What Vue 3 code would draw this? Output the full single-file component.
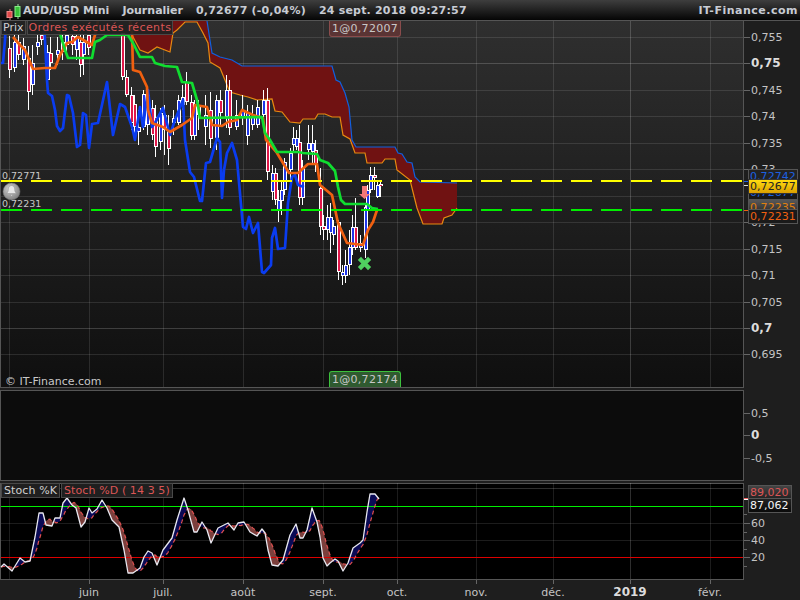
<script setup>
// x positions of the month lines
const months = [
  { x: 89, t: 'juin' }, { x: 163, t: 'juil.' }, { x: 243, t: 'août' },
  { x: 323, t: 'sept.' }, { x: 397, t: 'oct.' }, { x: 476, t: 'nov.' },
  { x: 553, t: 'déc.' }, { x: 630, t: '2019', bold: true }, { x: 710, t: 'févr.' },
]
const minorX = [9]

const priceTicks = [
  { y: 37, t: '0,755' }, { y: 63, t: '0,75', bold: true }, { y: 90, t: '0,745' },
  { y: 116, t: '0,74' }, { y: 143, t: '0,735' }, { y: 169, t: '0,73' },
  { y: 222, t: '0,72' }, { y: 249, t: '0,715' }, { y: 275, t: '0,71' },
  { y: 302, t: '0,705' }, { y: 328, t: '0,7', bold: true }, { y: 354, t: '0,695' },
]
const midTicks = [{ y: 413, t: '0,5' }, { y: 435, t: '0', bold: true }, { y: 458, t: '-0,5' }]
const stochTicks = [{ y: 523, t: '60' }, { y: 540, t: '40' }, { y: 557, t: '20' }]
const stochMinor = [514, 532, 549, 566]

// x, body top, body bottom, wick top, wick bottom, colour
const candles = [
  [9,48,70,36,78,'r'],[14,42,68,35,72,'b'],[18,42,55,35,60,'r'],[23,46,60,38,65,'b'],
  [28,58,92,46,110,'r'],[32,63,85,45,95,'b'],[37,42,47,35,55,'b'],[41,35,40,35,45,'r'],
  [47,52,80,45,90,'b'],[50,53,63,37,70,'r'],[57,50,55,37,65,'b'],[62,42,52,35,60,'r'],
  [66,35,45,35,55,'b'],[72,36,45,35,55,'r'],[76,36,50,35,60,'b'],[80,42,65,35,77,'r'],
  [83,42,55,35,75,'b'],[88,35,48,35,55,'r'],[122,33,77,33,80,'r'],[126,77,95,70,97,'r'],
  [131,95,123,87,130,'r'],[134,104,127,95,135,'r'],[138,127,132,110,145,'b'],[143,94,127,90,130,'b'],
  [147,95,125,90,135,'b'],[152,108,135,100,140,'r'],[155,117,147,105,157,'r'],[160,113,142,108,150,'b'],
  [164,115,130,105,155,'r'],[168,130,149,115,165,'r'],[173,118,123,110,135,'b'],[178,100,123,95,125,'b'],
  [182,97,105,85,110,'b'],[186,82,102,72,105,'r'],[191,102,136,95,140,'r'],[194,105,136,100,140,'b'],
  [198,105,115,100,130,'r'],[205,115,127,95,145,'b'],[210,110,139,92,148,'r'],[216,100,138,95,150,'b'],
  [220,100,113,90,125,'r'],[226,90,117,75,128,'b'],[229,90,128,80,135,'r'],[236,115,127,100,130,'b'],
  [242,110,117,95,125,'b'],[247,113,136,105,145,'b'],[252,117,125,105,130,'b'],[257,107,125,100,128,'b'],
  [263,100,115,90,120,'b'],[267,100,172,88,180,'r'],[272,173,192,165,200,'b'],[275,173,200,168,205,'r'],
  [278,200,211,190,222,'b'],[281,190,201,180,215,'b'],[284,162,190,158,195,'b'],[290,153,170,148,180,'b'],
  [293,138,145,127,153,'b'],[296,138,147,130,150,'b'],[299,142,198,125,205,'r'],[302,168,198,160,205,'b'],
  [308,143,150,125,160,'b'],[312,143,152,125,165,'b'],[315,150,165,140,172,'r'],[320,188,227,168,235,'r'],
  [323,226,230,215,240,'r'],[327,217,230,205,240,'b'],[330,217,233,203,253,'b'],[333,226,235,220,245,'b'],
  [338,222,272,220,280,'r'],[342,272,276,265,285,'b'],[345,265,276,250,283,'b'],[349,247,265,230,275,'b'],
  [352,227,248,215,255,'b'],[355,227,248,198,250,'r'],[360,243,248,235,252,'b'],[365,207,250,203,258,'b'],
  [367,190,210,185,212,'b'],[370,175,190,167,193,'b'],[374,175,178,167,190,'r'],[377,185,197,180,198,'b'],
  [380,184,186,180,197,'r'],
].map(([x, top, bot, wt, wb, c]) => ({ x, top, bot, wt, wb, c }))

const toPts = a => a.map(p => p.join(',')).join(' ')

const blueA = toPts([[1,63],[3,63],[5,40],[6,21]])
const blueB = toPts([[44,21],[47,80],[48,93],[52,96],[55,110],[57,126],[60,131],[63,128],[67,95],[69,96],[73,113],[77,147],[80,145],[83,113],[86,115],[89,148],[92,124],[98,123],[107,82],[113,135],[120,104],[125,107],[132,127],[135,140],[140,107],[143,127],[148,90],[152,127],[155,123],[163,108],[170,135],[175,120],[183,100],[185,140],[190,172],[194,177],[200,201],[202,201],[206,163],[210,162],[217,138],[220,142],[222,198],[224,170],[227,153],[232,143],[237,160],[243,227],[246,229],[249,217],[253,233],[258,223],[262,272],[264,273],[271,265],[272,238],[275,228],[278,249],[285,248],[288,203],[292,177],[295,175],[298,185],[304,187]])
const orangeA = toPts([[13,37],[20,45],[25,50],[33,69],[45,68],[55,68],[60,55],[67,43],[72,42],[78,37],[92,45],[95,35],[98,21]])
const orangeB = toPts([[130,21],[132,33],[133,70],[140,72],[147,87],[148,110],[152,123],[163,127],[170,132],[182,125],[192,118],[195,105],[207,107],[212,125],[222,126],[228,122],[237,120],[242,110],[253,115],[263,118],[266,140],[277,153],[289,173],[298,173],[308,164],[317,164],[320,185],[332,195],[338,223],[347,243],[363,245],[368,230],[373,222],[377,210]])
const green = toPts([[59,30],[65,50],[68,58],[92,58],[95,42],[100,40],[107,35],[128,35],[133,43],[140,57],[152,57],[155,63],[165,66],[177,67],[182,82],[192,83],[197,100],[200,118],[262,117],[265,133],[270,140],[277,152],[298,152],[303,153],[317,154],[320,160],[328,163],[335,171],[338,187],[341,200],[345,204],[367,204],[372,208],[378,209]])

const cloudTop = [[128,21],[207,21],[212,53],[220,57],[232,60],[242,66],[332,66],[336,80],[340,82],[345,93],[349,107],[352,140],[356,147],[395,147],[398,153],[402,154],[407,162],[412,163],[415,177],[420,182],[457,183]]
const cloudBot = [[132,35],[140,50],[148,53],[157,47],[170,52],[173,33],[177,30],[185,22],[197,22],[203,33],[208,43],[210,62],[220,68],[227,85],[230,92],[240,95],[248,97],[257,100],[272,99],[275,111],[282,112],[290,122],[300,123],[303,119],[315,119],[318,114],[325,114],[332,117],[340,117],[343,135],[350,139],[355,153],[365,153],[367,163],[382,163],[385,159],[395,159],[397,170],[410,180],[417,208],[423,224],[442,224],[444,218],[452,215],[457,208]]
const cloudFill = toPts([...cloudTop, ...[...cloudBot].reverse()])
const cloudUp = toPts(cloudTop.slice(1))
const cloudLow = toPts(cloudBot)

// stochastic: %K by hand, %D is a moving average of it
const k = [[1,567],[4,564],[12,571],[20,558],[25,562],[30,561],[35,537],[39,513],[43,513],[46,525],[52,526],[55,518],[60,518],[63,503],[67,498],[72,505],[76,508],[81,527],[85,522],[89,508],[92,513],[97,509],[102,500],[107,508],[112,520],[119,527],[124,550],[128,573],[133,573],[140,568],[144,557],[148,551],[152,553],[157,565],[163,550],[172,538],[177,520],[184,498],[188,510],[194,532],[197,532],[202,522],[207,530],[211,543],[218,528],[228,523],[234,530],[238,523],[244,522],[250,532],[257,536],[262,529],[265,533],[268,550],[272,565],[278,566],[283,560],[290,535],[296,524],[300,538],[303,538],[307,530],[312,508],[317,522],[320,537],[323,558],[327,566],[330,563],[335,559],[338,561],[343,571],[348,563],[353,548],[360,543],[363,540],[367,512],[370,494],[375,494],[379,499]]

function kAt(x) {
  if (x <= k[0][0]) return k[0][1]
  for (let i = 1; i < k.length; i++) {
    if (x <= k[i][0]) {
      const [x0, y0] = k[i - 1]
      const [x1, y1] = k[i]
      return y0 + (y1 - y0) * (x - x0) / (x1 - x0)
    }
  }
  return k[k.length - 1][1]
}
const dAt = x => (kAt(x) + kAt(x - 3.5) + kAt(x - 7) + kAt(x - 10.5)) / 4

const dLine = []
const fills = []
let run = null
for (let x = 1; x <= 379; x++) {
  const ky = kAt(x)
  const dy = dAt(x)
  dLine.push([x, dy.toFixed(1)])
  const up = ky < dy
  if (!run || run.up !== up) {
    run = { up, a: [], b: [] }
    fills.push(run)
  }
  run.a.push([x, ky.toFixed(1)])
  run.b.unshift([x, dy.toFixed(1)])
}
const stochFills = fills.map(r => ({ up: r.up, pts: toPts([...r.a, ...r.b]) }))
const kPts = toPts(k)
const dPts = toPts(dLine)
</script>

<template>
  <div class="chart">
    <header class="topbar">
      <svg class="logo" width="19" height="19" viewBox="0 0 19 19">
        <rect x="6" y="8" width="1" height="11" fill="#d88" />
        <rect x="3.5" y="10.5" width="5" height="6" fill="#e04848" stroke="#e88" />
        <rect x="14" y="3" width="1" height="15" fill="#9d9" />
        <rect x="11.5" y="5.5" width="5" height="10" fill="#38c038" stroke="#8e8" />
      </svg>
      <span>AUD/USD Mini</span>
      <span>Journalier</span>
      <span class="wide">0,72677 (-0,04%)</span>
      <span class="wide">24 sept. 2018 09:27:57</span>
      <span class="brand">IT-Finance.com</span>
    </header>

    <section class="row">
      <div class="plot plot-price">
        <svg width="744" height="367" viewBox="0 21 744 367">
          <g class="grid">
            <line v-for="t in priceTicks" :key="t.y" x1="1" x2="743" :y1="t.y + 0.5" :y2="t.y + 0.5" :class="{ strong: t.bold }" />
            <line x1="1" x2="743" y1="196.5" y2="196.5" />
            <line v-for="x in minorX" :key="x" :x1="x + 0.5" :x2="x + 0.5" y1="21" y2="387" />
            <line v-for="m in months" :key="m.x" :x1="m.x + 0.5" :x2="m.x + 0.5" y1="21" y2="387" :class="{ strong: m.bold }" />
          </g>

          <polygon :points="cloudFill" fill="#701212" />
          <polyline :points="cloudUp" class="thin" stroke="#1060e0" />
          <polyline :points="cloudLow" class="thin" stroke="#e88a10" />

          <g v-for="c in candles" :key="c.x" shape-rendering="crispEdges">
            <rect :x="c.x" :y="c.wt" width="1" :height="c.wb - c.wt" fill="#fff" />
            <rect :x="c.x - 1" :y="c.top" width="4" :height="c.bot - c.top" fill="#fff" />
            <rect :x="c.x" :y="c.top + 1" width="1.6" :height="Math.max(c.bot - c.top - 2, 1)" :fill="c.c === 'r' ? '#e0184a' : '#2036e8'" />
          </g>

          <polyline :points="blueA" class="line" stroke="#0a3cf0" />
          <polyline :points="blueB" class="line" stroke="#0a3cf0" />
          <polyline :points="orangeA" class="line" stroke="#f06010" />
          <polyline :points="orangeB" class="line" stroke="#f06010" />
          <polyline :points="green" class="line" stroke="#10dd30" />

          <line x1="1" x2="743" y1="181" y2="181" class="dash" stroke="#ffff00" />
          <line x1="1" x2="743" y1="210" y2="210" class="dash" stroke="#00ee00" />

          <polygon points="362,186 367,186 367,194 370,194 364.5,199 359,194 362,194" fill="#f47878" />
          <path d="M361 260 L368 267 M368 260 L361 267" stroke="#50d060" stroke-width="4.5" stroke-linecap="square" fill="none" />

          <circle cx="11.5" cy="191.5" r="8.5" fill="url(#bell)" stroke="#777" stroke-width="0.5" />
          <path d="M11.5 185.5c-2.4 0-3.2 2-3.2 4.2 0 1.8-.8 2.8-1.8 3.8h10c-1-1-1.800-2-1.800-3.800 0-2.200-.8-4.200-3.200-4.200z M10 194.500h3l-1.500 1.800z" fill="#e8e8e8" stroke="#8c8c8c" stroke-width="0.5" />
          <defs>
            <radialGradient id="bell" cx="0.4" cy="0.35" r="0.75">
              <stop offset="0" stop-color="#d4d4d4" />
              <stop offset="1" stop-color="#747474" />
            </radialGradient>
          </defs>

          <text x="2" y="178.500" class="tiny">0,72771</text>
          <text x="2" y="207" class="tiny">0,72231</text>
          <text x="5" y="385" class="small">© IT-Finance.com</text>
        </svg>
        <div class="legend">
          <span class="tag">Prix</span>
          <span class="tag red orders">Ordres exécutés récents</span>
        </div>
        <div class="trade sell">1@0,72007</div>
        <div class="trade buy">1@0,72174</div>
      </div>
      <div class="axis">
        <svg width="56" height="367" viewBox="744 21 56 367">
          <g v-for="t in priceTicks" :key="t.y">
            <line x1="744" x2="750" :y1="t.y + 0.5" :y2="t.y + 0.5" class="tick" />
            <text x="751" :y="t.y + 4" class="label" :class="{ bold: t.bold }">{{ t.t }}</text>
          </g>
          <rect x="744" y="181" width="5" height="1" fill="#2060e0" />
          <rect x="744" y="185" width="5" height="1" fill="#ddd" />
          <rect x="744" y="210" width="5" height="1" fill="#f06010" />
        </svg>
        <div class="box b-blue1">0,72742</div>
        <div class="box b-blue2">0,72677</div>
        <div class="box b-yellow">0,72677</div>
        <div class="box b-orange1">0,72235</div>
        <div class="box b-orange2">0,72231</div>
      </div>
    </section>

    <section class="row">
      <div class="plot plot-mid">
        <svg width="744" height="91" viewBox="0 390 744 91" />
      </div>
      <div class="axis">
        <svg width="56" height="91" viewBox="744 390 56 91">
          <g v-for="t in midTicks" :key="t.y">
            <line x1="744" x2="750" :y1="t.y + 0.5" :y2="t.y + 0.5" class="tick" />
            <text x="751" :y="t.y + 4" class="label" :class="{ bold: t.bold }">{{ t.t }}</text>
          </g>
        </svg>
      </div>
    </section>

    <section class="row">
      <div class="plot plot-stoch">
        <svg width="744" height="97" viewBox="0 483 744 97">
          <g class="grid">
            <line x1="1" x2="743" y1="488.500" y2="488.500" class="strong" />
            <line x1="1" x2="743" y1="523.500" y2="523.500" />
            <line x1="1" x2="743" y1="540.500" y2="540.500" />
            <line x1="9.500" x2="9.500" y1="483" y2="579" />
            <line v-for="m in months" :key="m.x" :x1="m.x + 0.5" :x2="m.x + 0.5" y1="483" y2="579" :class="{ strong: m.bold }" />
          </g>
          <polygon v-for="(f, i) in stochFills" :key="i" :points="f.pts" :fill="f.up ? '#0a0a55' : '#7c3f3c'" />
          <line x1="1" x2="743" y1="506.500" y2="506.500" stroke="#00ee00" />
          <line x1="1" x2="743" y1="557.500" y2="557.500" stroke="#dd0000" />
          <polyline :points="dPts" class="dline" />
          <polyline :points="kPts" class="kline" />
        </svg>
        <div class="legend">
          <span class="tag">Stoch %K</span>
          <span class="tag red">Stoch %D ( 14 3 5)</span>
        </div>
      </div>
      <div class="axis">
        <svg width="56" height="97" viewBox="744 483 56 97">
          <line v-for="y in stochMinor" :key="y" x1="744" x2="747" :y1="y + 0.5" :y2="y + 0.5" class="tick" />
          <g v-for="t in stochTicks" :key="t.y">
            <line x1="744" x2="750" :y1="t.y + 0.5" :y2="t.y + 0.5" class="tick" />
            <text x="751" :y="t.y + 4" class="label">{{ t.t }}</text>
          </g>
          <rect x="744" y="498" width="4" height="1" fill="#f06060" />
          <rect x="744" y="499" width="4" height="1" fill="#fff" />
        </svg>
        <div class="box b-d">89,020</div>
        <div class="box b-k">87,062</div>
      </div>
    </section>

    <svg class="dates" width="800" height="20" viewBox="0 580 800 20">
      <g v-for="m in months" :key="m.x">
        <line :x1="m.x + 0.5" :x2="m.x + 0.5" y1="580" y2="584" class="tick" />
        <text :x="m.x" y="596" text-anchor="middle" class="label" :class="{ bold: m.bold }">{{ m.t }}</text>
      </g>
    </svg>
  </div>
</template>

<style>
html,
body {
  margin: 0;
  background: #1e1e1e;
}
</style>

<style scoped>
.chart {
  width: 800px;
  height: 600px;
  background: #1e1e1e;
  display: flex;
  flex-direction: column;
  overflow: hidden;
  font-family: "DejaVu Sans", sans-serif;
}

.topbar {
  height: 20px;
  flex: none;
  display: flex;
  align-items: center;
  gap: 13px;
  padding: 0 2px 0 3px;
  box-sizing: content-box;
  background: linear-gradient(#3e3e3e, #050505);
  border-bottom: 1px solid #555;
  color: #c8ccd4;
  font-size: 11px;
  font-weight: 700;
  white-space: nowrap;
}

.logo {
  margin-right: -13px;
  width: 20px;
}

.wide {
  letter-spacing: 0.2px;
}

.brand {
  margin-left: auto;
  letter-spacing: 0.5px;
}

.row {
  display: flex;
  flex: none;
  margin-bottom: 2px;
}

.row:last-of-type {
  margin-bottom: 0;
}

.plot {
  position: relative;
  width: 744px;
  flex: none;
  box-shadow: inset 1px 0 0 #555, inset -1px 0 0 #555, inset 0 -1px 0 #555;
}

.plot svg {
  display: block;
}

.plot-price {
  height: 367px;
  background: linear-gradient(#2f2f2f, #0f0f0f);
}

.plot-mid {
  height: 91px;
  background: #0c0c0c;
  box-shadow: inset 0 0 0 1px #555;
}

.plot-stoch {
  height: 97px;
  background: #000;
  box-shadow: inset 0 0 0 1px #555;
}

.grid line {
  stroke: rgba(255, 255, 255, 0.11);
  stroke-width: 1;
}

.grid line.strong {
  stroke: rgba(255, 255, 255, 0.18);
}

.line {
  fill: none;
  stroke-width: 2.7;
  stroke-linejoin: round;
}

.thin {
  fill: none;
  stroke-width: 1.2;
}

.dash {
  stroke-width: 2;
  stroke-dasharray: 21 9;
}

.kline {
  fill: none;
  stroke: #e8e8f0;
  stroke-width: 1.3;
  stroke-linejoin: round;
}

.dline {
  fill: none;
  stroke: #e05050;
  stroke-width: 1.2;
  stroke-dasharray: 4 3;
}

.small {
  font-size: 11px;
  fill: #c8c8c8;
}

.tiny {
  font-size: 9.5px;
  fill: #c8c8c8;
}

.legend {
  position: absolute;
  left: 1px;
  top: 0;
  display: flex;
  gap: 1px;
}

.tag {
  height: 13px;
  line-height: 13px;
  padding: 0 1px;
  font-size: 11px;
  color: #d0d0d0;
  background: rgba(34, 34, 34, 0.92);
  border: 1px solid #484848;
  border-top-width: 0;
  white-space: nowrap;
}

.plot-stoch .tag {
  padding: 0 2px;
  border-top-width: 1px;
  letter-spacing: 0.1px;
}

.tag.red {
  color: #dc5656;
}

.orders {
  letter-spacing: 0.38px;
}

.trade {
  position: absolute;
  left: 329px;
  width: 72px;
  height: 16px;
  line-height: 16px;
  box-sizing: border-box;
  text-align: center;
  font-size: 11px;
  letter-spacing: 0.3px;
  color: #c8c8c8;
}

.sell {
  top: 0;
  background: #5a3434;
  border: 1px solid #8a4c4c;
  border-top: 0;
  border-radius: 0 0 3px 3px;
}

.buy {
  bottom: 1px;
  background: #2f5a30;
  border: 1px solid #3cc03c;
  border-bottom: 0;
  border-radius: 3px 3px 0 0;
  line-height: 15px;
}

.axis {
  position: relative;
  width: 56px;
  flex: none;
}

.axis svg {
  display: block;
}

.tick {
  stroke: #666;
}

.label {
  font-size: 11px;
  fill: #c4c4c4;
}

.label.bold {
  font-size: 12px;
  font-weight: 700;
  fill: #dcdcdc;
}

.box {
  position: absolute;
  left: 4px;
  width: 50px;
  height: 15px;
  line-height: 14px;
  box-sizing: border-box;
  padding-left: 1px;
  overflow: hidden;
  font-size: 11px;
  letter-spacing: 0.05px;
  background: #181818;
  border: 1px solid #555;
}

.b-blue1 {
  top: 148px;
  height: 16px;
  color: #1c60e0;
  background: #222;
}

.b-blue2 {
  top: 164px;
  color: #1c60e0;
}

.b-yellow {
  top: 158px;
  color: #222;
  background: linear-gradient(#ffdc10, #dca000);
  border-color: #333;
}

.b-orange1 {
  top: 179px;
  color: #e08010;
  background: linear-gradient(#555, #222);
  border-bottom: 0;
}

.b-orange2 {
  top: 188px;
  color: #f06010;
  background: #1a1a1a;
}

.b-d,
.b-k {
  width: 44px;
  padding-left: 1px;
  letter-spacing: 0;
}

.b-d {
  top: 2px;
  color: #dc5656;
  background: linear-gradient(#444, #222);
}

.b-k {
  top: 15px;
  color: #f4f4f4;
  background: linear-gradient(#222, #0a0a0a);
}

.dates {
  display: block;
  flex: none;
}
</style>
